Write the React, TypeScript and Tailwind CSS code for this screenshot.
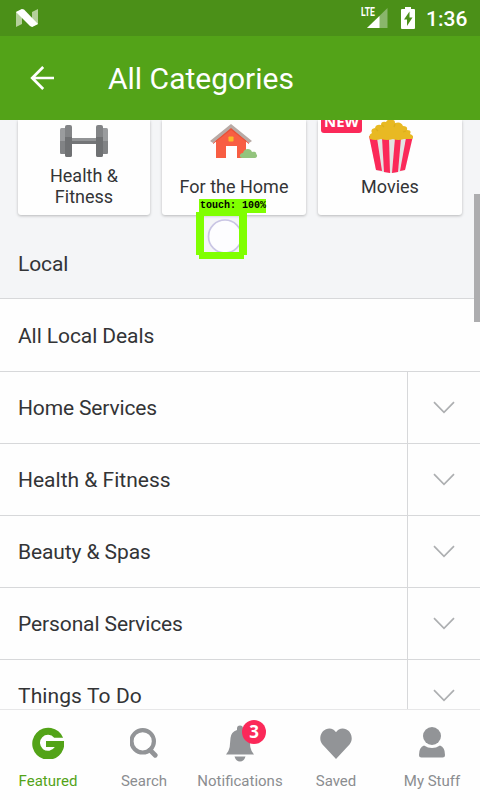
import type { ReactNode } from 'react';

const departments = [
  { name: 'Home Services', tracking: 'tracking-[-0.15px]' },
  { name: 'Health & Fitness', tracking: 'tracking-normal' },
  { name: 'Beauty & Spas', tracking: 'tracking-[-0.1px]' },
  { name: 'Personal Services', tracking: 'tracking-[-0.11px]' },
  { name: 'Things To Do', tracking: 'tracking-[0.1px]' },
];

function StatusBar() {
  return (
    <div className="flex h-9 shrink-0 items-center bg-[#4b9018] pl-4 pr-3 text-white">
      <svg width="22" height="18" viewBox="0 0 22 18">
        <path d="M0 3L6 0V15L0 18Z" fill="#b5d09b" />
        <path d="M16 3L22 0V15L16 18Z" fill="#b5d09b" />
        <path d="M0 3L6 0L8 .6L22 15L16 18L14 17Z" fill="#fff" />
      </svg>
      <div className="ml-auto flex items-center">
        <div className="flex h-[22px] items-start">
          <span className="w-[13px] origin-top-left scale-x-[.72] text-[12px] font-bold leading-[11px]">LTE</span>
          <svg className="-ml-2 mt-px" width="22" height="20" viewBox="0 0 22 20">
            <path d="M1 20L21.5 0V20Z" fill="#8ab66b" />
            <path d="M1 20L13.5 8V20Z" fill="#fff" />
          </svg>
        </div>
        <svg className="-mt-px ml-[13px]" width="14" height="22" viewBox="0 0 14 22">
          <path d="M4 0H10V2H13Q14 2 14 3V21Q14 22 13 22H1Q0 22 0 21V3Q0 2 1 2H4Z" fill="#fff" />
          <path d="M8.5 4.5L3 12.5H6V19L11.5 10.5H8.5Z" fill="#4b9018" />
        </svg>
        <span className="ml-[11px] mt-[2px] w-[42px] whitespace-nowrap text-[21px] font-medium leading-6">1:36</span>
      </div>
    </div>
  );
}

function Dumbbell() {
  return (
    <svg width="48" height="32" viewBox="0 0 48 32">
      <rect x="10" y="13" width="28" height="3" fill="#929496" />
      <rect x="10" y="16" width="28" height="3" fill="#737577" />
      <rect x="0" y="3" width="7" height="26" rx="1.5" fill="#9a9c9e" />
      <path d="M0 16H7V29H1.5Q0 29 0 27Z" fill="#818385" />
      <rect x="41" y="3" width="7" height="26" rx="1.5" fill="#9a9c9e" />
      <path d="M41 16H48V27Q48 29 46.5 29H41Z" fill="#818385" />
      <rect x="5" y="0" width="7" height="32" rx="2" fill="#828486" />
      <path d="M5 12H12V30Q12 32 10 32H7Q5 32 5 30Z" fill="#6f7173" />
      <rect x="36" y="0" width="7" height="32" rx="2" fill="#828486" />
      <path d="M36 12H43V30Q43 32 41 32H38Q36 32 36 30Z" fill="#6f7173" />
    </svg>
  );
}

function House() {
  return (
    <svg width="48" height="35" viewBox="0 0 48 35">
      <path d="M6 16L21 3L36 16V34H6Z" fill="#f85e43" />
      <path d="M0 17L21 0L42 17L39 19L21 5L3 19Z" fill="#b8aaa5" />
      <path d="M3 19L21 4L39 19V20L21 6L3 20Z" fill="#e85138" />
      <rect x="18.5" y="12.5" width="5" height="5" rx=".7" fill="#fbb829" />
      <path d="M16 22H27V34H16Z" fill="#fff" />
      <path d="M32 34C29 34 29 29 33 29C34 24 41 24 42 28C45 27 47 29 46 30C48 31 47 34 45 34Z" fill="#93c47d" />
    </svg>
  );
}

function Popcorn() {
  return (
    <svg width="44" height="54" viewBox="0 0 44 54">
      <path d="M1 17L43 17L36 50L29 52L22 53L14 52L7 50Z" fill="#e3e3e3" />
      <path d="M0 16L8 18L13 51L7 50Z" fill="#fb2959" />
      <path d="M13 18H20L21 53L15 52Z" fill="#fb2959" />
      <path d="M26 18H32L29 52L23 53Z" fill="#fb2959" />
      <path d="M37 18L44 16L36 50L31 51Z" fill="#fb2959" />
      <path d="M1 19Q-1 15 3 13Q1 9 6 8Q7 4 12 5Q12 1 17 2Q18 0 19 0H24Q26 0 26 3Q32 1 34 6Q39 6 38 10Q43 10 41 14Q46 16 43 19L35 19Q29 21 24 19Q18 21 12 19Q6 21 1 19Z" fill="#e8b923" />
      <path d="M13 5L15 7M7 9L9 11M26 4L25 7M37 11L34 12" stroke="#dcae1e" strokeWidth="1.3" />
    </svg>
  );
}

function Card({ width, iconTop, label, labelTop, children }: { width: string; iconTop: string; label: ReactNode; labelTop: string; children: ReactNode }) {
  return (
    <div className={`h-[95px] ${width} flex flex-col items-center rounded-b-[3px] bg-[#fefefe] text-center text-[18px] leading-[21px] shadow-[0_1px_3px_rgba(0,0,0,.25)]`}>
      <div className={`${iconTop} *:block`}>{children}</div>
      <div className={`${labelTop} whitespace-nowrap`}>{label}</div>
    </div>
  );
}

function TouchMarker() {
  return (
    <div className="absolute left-[196px] top-[199px] w-[71px]">
      <div className="ml-[3px] h-[14px] w-[67px] whitespace-nowrap bg-[#80ff00] pl-px pt-px font-['Liberation_Mono',monospace] text-[10px] font-bold leading-[11px] text-black">touch: 100%</div>
      <div className="-mt-px h-[48px] w-[51px]">
        <svg width="51" height="48" viewBox="0 0 51 48">
          <circle cx="29" cy="24.5" r="16.5" fill="#fdfdff" stroke="#c9c5e4" strokeWidth="1.7" />
          <path d="M0 0H51V43H48V47H3V43H0ZM8 4V40H43V4Z" fill="#80ff00" fillRule="evenodd" />
        </svg>
      </div>
    </div>
  );
}

function Chevron() {
  return (
    <svg width="22" height="13" viewBox="0 0 22 13" fill="none" stroke="#adafb1" strokeWidth="1.7">
      <path d="M1 1.2L11 11.3L21 1.2" />
    </svg>
  );
}

function Tab({ label, active, children }: { label: string; active?: boolean; children: ReactNode }) {
  return (
    <div className={`flex w-24 flex-col items-center ${active ? 'text-[#53a318]' : 'text-[#8b8d90]'}`}>
      <div className="mt-4 flex h-[34px] items-center justify-center">{children}</div>
      <span className="mt-3 whitespace-nowrap text-[15px] leading-[18px]">{label}</span>
    </div>
  );
}

export default function App() {
  return (
    <div className="relative flex h-[800px] w-[480px] flex-col overflow-hidden bg-[#fefefe] font-[Roboto,'Liberation_Sans',sans-serif] text-[#333436]">
      <StatusBar />
      <header className="flex h-[84px] shrink-0 items-center bg-[#53a318] text-white">
        <svg className="ml-[30px]" width="24" height="24" viewBox="0 0 24 24" fill="none" stroke="#fff" strokeWidth="2.7">
          <path d="M13.2 1L2.2 12L13.2 23M2 12H24" />
        </svg>
        <h1 className="ml-[54px] mt-[2px] text-[30px] leading-9">All Categories</h1>
      </header>
      <main className="flex min-h-0 flex-1 flex-col overflow-hidden">
        <section className="h-[179px] shrink-0 border-b border-[#d7d8da] bg-[#f4f5f7]">
          <div className="flex gap-3 pl-[18px]">
            <Card width="w-[132px]" iconTop="mt-[5px]" label={<>Health &amp;<br />Fitness</>} labelTop="mt-[8px]"><Dumbbell /></Card>
            <Card width="w-[144px]" iconTop="mt-[4px]" label="For the Home" labelTop="mt-[17px]"><House /></Card>
            <div className="relative">
              <Card width="w-[144px]" iconTop="mt-0 pl-[2px]" label="Movies" labelTop="mt-[2px]"><Popcorn /></Card>
              <div className="absolute left-[3px] top-0 h-[13px] w-[41px] overflow-hidden rounded-b-[3px] bg-[#fb2959] text-center font-['Open_Sans',sans-serif] text-[15px] font-bold text-white"><div className="-mt-[8px] leading-[19px]">NEW</div></div>
            </div>
          </div>
          <h2 className="ml-[18px] mt-[37px] text-[21px] leading-6 tracking-[-0.1px]">Local</h2>
        </section>
        <div className="flex h-[73px] shrink-0 items-center border-b border-[#d7d8da] pl-[18px] pt-[2px] text-[21px] leading-6 tracking-[-0.08px]">All Local Deals</div>
        {departments.map(({ name, tracking }) => (
          <div key={name} className="flex h-[72px] shrink-0 border-b border-[#d7d8da] text-[21px] leading-6">
            <div className={`flex w-[408px] items-center border-r border-[#d7d8da] pl-[18px] pt-px ${tracking}`}>{name}</div>
            <div className="flex flex-1 items-center justify-center pr-px"><Chevron /></div>
          </div>
        ))}
      </main>
      <nav className="flex h-[91px] shrink-0 border-t border-[#e7e7e8] bg-[#fefefe]">
        <Tab label="Featured" active>
          <svg width="32" height="32" viewBox="0 0 32 32">
            <path d="M31.1 10.8A16 16 0 1 0 32 14H14V20H22.8A8 8 0 1 1 22.2 10.8Z" fill="#53a318" />
          </svg>
        </Tab>
        <Tab label="Search">
          <svg width="28" height="30" viewBox="0 0 28 30" fill="none" stroke="#929497">
            <circle cx="12.7" cy="13.3" r="11.2" strokeWidth="4.2" />
            <path d="M20 22L25.2 27.2" strokeWidth="4.8" strokeLinecap="round" />
          </svg>
        </Tab>
        <Tab label="Notifications">
          <div className="relative">
            <svg width="28" height="37" viewBox="0 0 28 37" fill="#929497">
              <path d="M11 3.5A3 3 0 0 1 17 3.5L17 5Q23 7 23.5 13L24.3 22Q25 26 28 29.5H0Q3 26 3.7 22L4.5 13Q5 7 11 5ZM8.5 31.5H19.5Q18 36.5 14 36.5T8.5 31.5Z" />
            </svg>
            <span className="absolute -top-[5px] left-4 flex h-6 w-6 items-center justify-center rounded-full bg-[#fb2959] font-['Open_Sans',sans-serif] text-[17px] font-bold leading-none text-white">3</span>
          </div>
        </Tab>
        <Tab label="Saved">
          <svg width="32" height="31" viewBox="0 0 32 31">
            <path d="M16 31L2.5 16.5C-1.5 12 0 3.5 6 1.2C10-.5 14 1 16 4.2C18 1 22-.5 26 1.2C32 3.5 33.5 12 29.5 16.5Z" fill="#929497" />
          </svg>
        </Tab>
        <Tab label="My Stuff">
          <svg className="-mt-[2px]" width="26" height="31" viewBox="0 0 26 31" fill="#929497">
            <circle cx="13" cy="9" r="9" />
            <path d="M5 18.5Q13 23.5 21 18.5Q26 20 26 28Q26 30.5 23.5 30.5H2.5Q0 30.5 0 28Q0 20 5 18.5Z" />
          </svg>
        </Tab>
      </nav>
      <div className="absolute right-0 top-[194px] h-[128px] w-[6px] bg-[#adadaf]" />
      <TouchMarker />
    </div>
  );
}
